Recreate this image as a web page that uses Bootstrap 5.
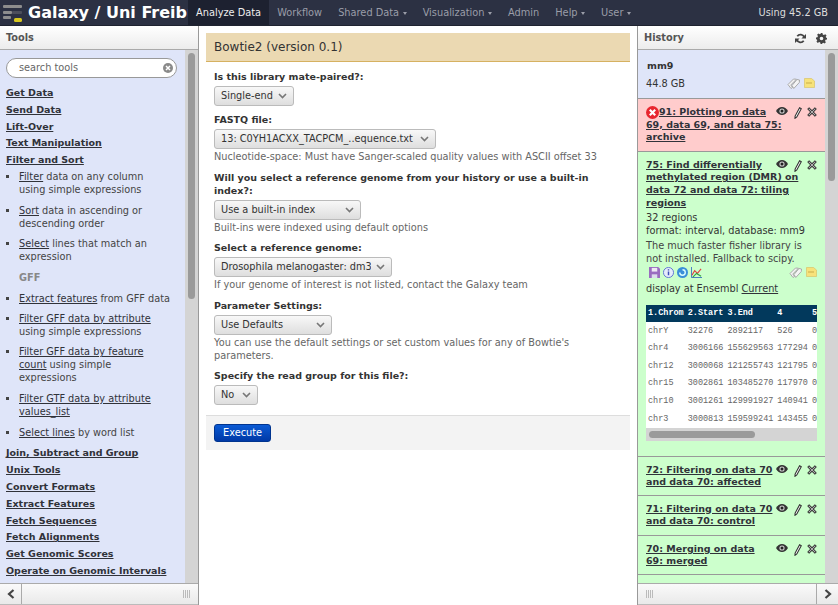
<!DOCTYPE html>
<html lang="en">
<head>
<meta charset="UTF-8">
<title>Galaxy / Uni Freiburg</title>
<link href="https://cdn.jsdelivr.net/npm/bootstrap@5.3.0/dist/css/bootstrap.min.css" rel="stylesheet">
<style>
html, body { height: 100%; overflow: hidden; }
body { font-family: "DejaVu Sans", sans-serif; font-size: 9.75px; line-height: 13px; color: #333; background: #fff; }
a { color: #303239; }
.gx-shell { height: 605px; width: 838px; }
.gx-top { height: 26px; background: #2c3143; color: #fff; flex: none; border-bottom: 1px solid #1f2330; }
.gx-logo { width: 26px; margin-left: 2px; flex: none; }
.gx-brand { width: 160px; font-size: 16px; font-weight: 700; line-height: 25px; color: #fff; overflow: hidden; white-space: nowrap; flex: none; }
.gx-tab { padding: 0 8px; font-size: 9.8px; line-height: 25px; color: #9a9da8; white-space: nowrap; }
.gx-tab.on { background: #1d2130; color: #eee; }
.gx-caret { display: inline-block; margin-left: 3.500px; vertical-align: middle; border-left: 2.500px solid transparent; border-right: 2.500px solid transparent; border-top: 3px solid #9a9da8; }
.gx-quota { margin-left: auto; padding-right: 10px; line-height: 25px; color: #ddd; white-space: nowrap; }
.gx-main { height: 579px; }
.gx-side { flex: none; background: #fff; }
.gx-left { width: 199px; border-right: 1px solid #999; }
.gx-right { width: 201px; border-left: 1px solid #999; margin-left: 7px; }
.gx-head { height: 24px; flex: none; padding: 1px 6px 0; font-weight: 700; line-height: 22px; color: #555; background: linear-gradient(#fff, #ececec); border-bottom: 1px solid #aaa; }
.gx-hicons { gap: 10px; padding-right: 5px; }
.gx-body { flex: 1; min-height: 0; }
.gx-scroll { flex: 1; min-width: 0; overflow: hidden; }
.gx-track { width: 13px; flex: none; background: #d4d4d4; }
.gx-thumb { width: 7px; margin: 3px auto 0; border-radius: 4px; background: #9a9a9a; }
.gx-foot { height: 22px; flex: none; background: linear-gradient(#fafafa, #e9e9e9); border-top: 1px solid #aaa; border-bottom: 1px solid #bbb; }
.gx-arrow { width: 22px; flex: none; border-right: 1px solid #aaa; }
.gx-arrow.flip { border-right: 0; border-left: 1px solid #aaa; }
.gx-grip { width: 7px; height: 8px; margin-right: 8px; background: repeating-linear-gradient(90deg, #bbb 0 1px, transparent 1px 2px); }
.gx-tools { background: #dfe5f9; height: 100%; padding: 8px 6px 0; overflow: hidden; }
.gx-search { height: 20px; width: 171px; margin-bottom: 6px; border: 1px solid #999; border-radius: 10px; background: #fff; padding: 0 3px 0 12px; line-height: 18px; color: #666; }
.gx-sect { display: block; font-size: 9.500px; font-weight: 700; color: #303239; line-height: 13px; padding: 2px 0 1.800px; white-space: nowrap; }
.gx-list { list-style: square; margin: 2px 8px -2px 0; padding: 0 0 0 13px; color: #444; }
.gx-list li { margin-bottom: 7.700px; line-height: 13px; }
.gx-list li.gx-sub { list-style: none; font-weight: 700; color: #888; }
.gx-list li.gx-snug { margin-bottom: 7px; }
.gx-form { width: 424px; margin: 7px 0 0 7px; }
.gx-title { height: 29px; padding: 0 8px; line-height: 28px; font-size: 12px; background: #ebd9b2; border-bottom: 1px solid #d6b161; color: #333; }
.gx-fields { padding: 8px 8px 7px; }
.gx-row { margin-bottom: 7.400px; }
.gx-label { display: block; margin: 0 0 3px; font-size: 9.500px; font-weight: 700; color: #333; }
.gx-help { color: #666; margin-top: -2px; }
.gx-pick.form-select { display: block; height: 20px; margin-bottom: 3px; padding: 0 20px 0 6px; font-size: 9.75px; line-height: 18px; color: #333; border: 1px solid #bbb; border-radius: 3px; background-color: #e9e9e9; background-image: url("data:image/svg+xml,%3csvg xmlns='http://www.w3.org/2000/svg' viewBox='0 0 9 6'%3e%3cpath fill='none' stroke='%23777' stroke-width='1.6' d='M1 1l3.5 3.5L8 1'/%3e%3c/svg%3e"), linear-gradient(#f8f8f8, #dedede); background-repeat: no-repeat; background-position: right 6px center, 0 0; background-size: 9px 6px, 100% 100%; }
.gx-actions { padding: 8px; background: #f3f3f3; border-top: 1px solid #ddd; }
.gx-run.btn { display: block; width: 57px; height: 18px; padding: 0; font-size: 9.75px; line-height: 16px; color: #fff; border: 1px solid #00348f; border-radius: 3px; background: linear-gradient(#0a5ad4, #0039a6); }
.gx-hist { height: 100%; overflow: hidden; }
.gx-info { background: #dfe5f9; padding: 5px 10px 7px 8px; border-bottom: 1px solid #999; height: 49px; }
.gx-name { font-size: 9.500px; font-weight: 700; margin: 4px 0 5px 1px; }
.gx-ds { padding: 6.500px 8px 0; border-bottom: 1px solid #999; color: #333; overflow: hidden; }
.gx-ds.err { background: #ffcccc; height: 53px; }
.gx-ds.ok { background: #ccffcc; }
.gx-ds-title { font-size: 9.500px; line-height: 12.700px; font-weight: 700; color: #303239; text-decoration: underline; }
.gx-ds-icons { width: 41px; height: 12px; margin-left: 3px; display: flex; justify-content: space-between; align-items: flex-start; padding-top: 1px; }
.gx-gap { margin-top: 2px; }
.gx-dsicons { padding-left: 3px; gap: 3px; }
.gx-peek { margin-top: 10px; width: 171px; overflow: hidden; background: #fff; }
.gx-peek table { font-family: "Liberation Mono", monospace; font-size: 8.500px; color: #666; border-collapse: collapse; background: #fff; white-space: nowrap; }
.gx-peek th { background: #02395c; color: #fff; height: 17px; padding: 0 2px; font-weight: 700; }
.gx-peek td { height: 17.600px; padding: 0 2px; }
.gx-hbar { width: 171px; height: 13px; background: #d4d4d4; display: flex; align-items: center; padding-left: 3px; }
.gx-hbar div { width: 106px; height: 7px; border-radius: 4px; background: #9a9a9a; }
</style>
</head>
<body>
<svg width="0" height="0" class="position-absolute">
  <symbol id="i-eye" viewBox="0 0 12 8"><path fill="#333" d="M0 4c1.6-2.6 3.6-4 6-4s4.400 1.400 6 4c-1.600 2.600-3.600 4-6 4S1.600 6.600 0 4z"/><circle cx="6" cy="4" r="2.600" fill="#ccc"/><circle cx="6" cy="4" r="1.500" fill="#222"/></symbol>
  <symbol id="i-pen" viewBox="0 0 8 12"><path fill="#fff" stroke="#333" stroke-width="1.100" d="M5.600 .8l1.700.9-4.500 8.300-1.800 1.300.1-2.200z"/></symbol>
  <symbol id="i-x" viewBox="0 0 10 10"><path fill="#444" stroke="#222" stroke-width=".4" d="M2 .5L5 3.300 8 .5 9.500 2 6.700 5l2.800 3L8 9.500 5 6.700 2 9.500.5 8l2.800-3L.5 2z"/><path stroke="#ddd" stroke-width=".7" d="M2 2l6 6M8 2L2 8"/></symbol>
  <symbol id="i-tag" viewBox="0 0 13 11"><path fill="#f4f4f4" stroke="#aaa" d="M1 6.500L6.500 1l3 .2-5.700 5.800 1.700 2.500L4 10.500zM5 7.500L10 1.500l2.500.5-.2 2.500-5.500 6z"/></symbol>
  <symbol id="i-note" viewBox="0 0 11 10"><path fill="#f7e27a" stroke="#d8c46a" stroke-width=".7" d="M.5 .5h7l3 2.500v6.500H.5z"/><path stroke="#c9ad4a" d="M2 5h6"/></symbol>
  <symbol id="i-left" viewBox="0 0 8 10"><path fill="none" stroke="#444" stroke-width="2.200" d="M6.500 1L2 5l4.500 4"/></symbol>
  <symbol id="i-right" viewBox="0 0 8 10"><path fill="none" stroke="#444" stroke-width="2.200" d="M1.500 1L6 5 1.500 9"/></symbol>
</svg>

<div class="gx-shell d-flex flex-column">
  <div class="gx-top d-flex align-items-start">
    <svg class="gx-logo" height="24" viewBox="0 0 26 24"><rect x="1" y="5" width="19" height="3" rx="1" fill="#8d8d8d"/><rect x="1" y="11" width="9" height="3" rx="1" fill="#8d8d8d"/><rect x="10" y="11" width="10" height="3" rx="1" fill="#4c4f5c"/><rect x="1" y="16" width="8" height="3" rx="1" fill="#8d8d8d"/><rect x="12" y="18" width="8" height="4" rx="1.500" fill="#d8c81f"/></svg>
    <div class="gx-brand">Galaxy / Uni Freiburg</div>
    <div class="gx-tab on">Analyze Data</div>
    <div class="gx-tab">Workflow</div>
    <div class="gx-tab">Shared Data<span class="gx-caret"></span></div>
    <div class="gx-tab">Visualization<span class="gx-caret"></span></div>
    <div class="gx-tab">Admin</div>
    <div class="gx-tab">Help<span class="gx-caret"></span></div>
    <div class="gx-tab">User<span class="gx-caret"></span></div>
    <div class="gx-quota">Using 45.2 GB</div>
  </div>

  <div class="gx-main d-flex">
    <div class="gx-side gx-left d-flex flex-column">
      <div class="gx-head">Tools</div>
      <div class="gx-body d-flex">
        <div class="gx-scroll">
          <div class="gx-tools">
            <div class="gx-search d-flex justify-content-between align-items-center"><span>search tools</span>
              <svg width="10" height="10" viewBox="0 0 10 10"><circle cx="5" cy="5" r="5" fill="#8a8a8a"/><path stroke="#fff" stroke-width="1.500" d="M3 3l4 4M7 3L3 7"/></svg></div>
            <a class="gx-sect" href="#">Get Data</a>
            <a class="gx-sect" href="#">Send Data</a>
            <a class="gx-sect" href="#">Lift-Over</a>
            <a class="gx-sect" href="#">Text Manipulation</a>
            <a class="gx-sect" href="#">Filter and Sort</a>
            <ul class="gx-list">
              <li><a href="#">Filter</a> data on any column using simple expressions</li>
              <li><a href="#">Sort</a> data in ascending or descending order</li>
              <li><a href="#">Select</a> lines that match an expression</li>
              <li class="gx-sub">GFF</li>
              <li class="gx-snug"><a href="#">Extract features</a> from GFF data</li>
              <li><a href="#">Filter GFF data by attribute</a> using simple expressions</li>
              <li><a href="#">Filter GFF data by feature count</a> using simple expressions</li>
              <li><a href="#">Filter GTF data by attribute values_list</a></li>
              <li><a href="#">Select lines</a> by word list</li>
            </ul>
            <a class="gx-sect" href="#">Join, Subtract and Group</a>
            <a class="gx-sect" href="#">Unix Tools</a>
            <a class="gx-sect" href="#">Convert Formats</a>
            <a class="gx-sect" href="#">Extract Features</a>
            <a class="gx-sect" href="#">Fetch Sequences</a>
            <a class="gx-sect" href="#">Fetch Alignments</a>
            <a class="gx-sect" href="#">Get Genomic Scores</a>
            <a class="gx-sect" href="#">Operate on Genomic Intervals</a>
          </div>
        </div>
        <div class="gx-track"><div class="gx-thumb" style="height:246px"></div></div>
      </div>
      <div class="gx-foot d-flex align-items-center justify-content-between">
        <div class="gx-arrow h-100 d-flex align-items-center justify-content-center"><svg width="8" height="10"><use href="#i-left"/></svg></div>
        <div class="gx-grip"></div>
      </div>
    </div>

    <div class="gx-form">
      <div class="gx-title">Bowtie2 (version 0.1)</div>
      <form class="gx-fields">
        <div class="gx-row">
          <label class="gx-label">Is this library mate-paired?:</label>
          <select class="form-select gx-pick" style="width:80px"><option>Single-end</option></select>
        </div>
        <div class="gx-row">
          <label class="gx-label">FASTQ file:</label>
          <select class="form-select gx-pick" style="width:222px"><option>13: C0YH1ACXX_TACPCM_..equence.txt</option></select>
          <div class="gx-help">Nucleotide-space: Must have Sanger-scaled quality values with ASCII offset 33</div>
        </div>
        <div class="gx-row">
          <label class="gx-label">Will you select a reference genome from your history or use a built-in index?:</label>
          <select class="form-select gx-pick" style="width:147px"><option>Use a built-in index</option></select>
          <div class="gx-help">Built-ins were indexed using default options</div>
        </div>
        <div class="gx-row">
          <label class="gx-label">Select a reference genome:</label>
          <select class="form-select gx-pick" style="width:178px"><option>Drosophila melanogaster: dm3</option></select>
          <div class="gx-help">If your genome of interest is not listed, contact the Galaxy team</div>
        </div>
        <div class="gx-row">
          <label class="gx-label">Parameter Settings:</label>
          <select class="form-select gx-pick" style="width:118px"><option>Use Defaults</option></select>
          <div class="gx-help">You can use the default settings or set custom values for any of Bowtie's parameters.</div>
        </div>
        <div class="gx-row mb-0">
          <label class="gx-label">Specify the read group for this file?:</label>
          <select class="form-select gx-pick" style="width:44px"><option>No</option></select>
        </div>
      </form>
      <div class="gx-actions"><button type="button" class="btn gx-run">Execute</button></div>
    </div>

    <div class="gx-side gx-right d-flex flex-column">
      <div class="gx-head d-flex justify-content-between align-items-center">
        <span>History</span>
        <span class="d-flex gx-hicons align-items-center">
          <svg width="11" height="11" viewBox="0 0 12 12"><path fill="none" stroke="#444" stroke-width="2" d="M10 4.500A4.300 4.300 0 0 0 2.500 3.500M2 7.500a4.300 4.300 0 0 0 7.500 1"/><path fill="#444" d="M12 1v5H7zM0 11V6h5z"/></svg>
          <svg width="11" height="11" viewBox="0 0 12 12"><path fill="#444" fill-rule="evenodd" d="M5 0h2l.4 1.700 1.200.5L10.100 1.300l1.400 1.400-.9 1.500.5 1.200L12 5v2l-1.600.4-.5 1.200.9 1.500-1.400 1.400-1.500-.9-1.200.5L7 12H5l-.4-1.600-1.200-.5-1.500.9-1.400-1.400.9-1.500-.5-1.200L0 7V5l1.600-.4.5-1.200-.9-1.500L2.600 .5l1.500.9 1.200-.5zM6 4a2 2 0 1 0 0 4 2 2 0 0 0 0-4z"/></svg>
        </span>
      </div>
      <div class="gx-body d-flex">
        <div class="gx-scroll">
          <div class="gx-hist">
            <div class="gx-info">
              <div class="gx-name">mm9</div>
              <div class="d-flex justify-content-between align-items-center">
                <span>44.8 GB</span>
                <span class="d-flex gap-1"><svg width="13" height="11"><use href="#i-tag"/></svg><svg width="11" height="10"><use href="#i-note"/></svg></span>
              </div>
            </div>
            <div class="gx-ds err">
              <div class="gx-ds-icons float-end"><svg width="12" height="8"><use href="#i-eye"/></svg><svg width="8" height="12"><use href="#i-pen"/></svg><svg width="10" height="10"><use href="#i-x"/></svg></div>
              <div class="gx-ds-title">
                <svg class="align-text-top" width="13" height="13" viewBox="0 0 12 12"><circle cx="6" cy="6" r="6" fill="#e8262f"/><path stroke="#fff" stroke-width="2" d="M3.500 3.500l5 5M8.500 3.500l-5 5"/></svg>91: Plotting on data 69, data 69, and data 75: archive
              </div>
            </div>
            <div class="gx-ds ok" style="height:305px">
              <div class="gx-ds-icons float-end"><svg width="12" height="8"><use href="#i-eye"/></svg><svg width="8" height="12"><use href="#i-pen"/></svg><svg width="10" height="10"><use href="#i-x"/></svg></div>
              <div class="gx-ds-title">75: Find differentially methylated region (DMR) on data 72 and data 72: tiling regions</div>
              <div class="gx-gap">32 regions<br>format: interval, database: mm9</div>
              <div class="gx-gap" style="color:#444">The much faster fisher library is not installed. Fallback to scipy.</div>
              <div class="d-flex justify-content-between gx-gap" style="height:13px">
                <span class="d-flex gx-dsicons">
                  <svg width="11" height="11" viewBox="0 0 12 12"><path fill="#9a6cc0" d="M0 0h10l2 2v10H0z"/><path fill="#efe8f5" d="M3 1h6v4H3z"/><path fill="#dcdcec" d="M3 8h6v4H3z"/></svg>
                  <svg width="11" height="11" viewBox="0 0 12 12"><circle cx="6" cy="6" r="5.500" fill="#e6ecfb" stroke="#5a6fd0"/><path stroke="#3b4fb8" stroke-width="1.600" d="M6 5v4M6 2.500v1.300"/></svg>
                  <svg width="11" height="11" viewBox="0 0 12 12"><circle cx="6" cy="6" r="6" fill="#3a8fd8"/><path fill="none" stroke="#dff" stroke-width="1.500" d="M3 6a3 3 0 1 0 3-3"/></svg>
                  <svg width="11" height="11" viewBox="0 0 12 12"><path fill="none" stroke="#3a6fc0" d="M.5 0v11.500H12"/><path fill="none" stroke="#e04040" stroke-width="1.200" d="M1 9l3-5 3 3 4-5"/><path fill="none" stroke="#30a040" stroke-width="1.200" d="M2 11l4-4 5 3"/></svg>
                </span>
                <span class="d-flex gap-1"><svg width="13" height="11"><use href="#i-tag"/></svg><svg width="11" height="10"><use href="#i-note"/></svg></span>
              </div>
              <div class="gx-gap">display at Ensembl <a href="#">Current</a></div>
              <div class="gx-peek">
                <table>
                  <tr><th>1.Chrom</th><th>2.Start</th><th>3.End</th><th>4</th><th>5</th></tr>
                  <tr><td>chrY</td><td>32276</td><td>2892117</td><td>526</td><td>0</td></tr>
                  <tr><td>chr4</td><td>3006166</td><td>155629563</td><td>177294</td><td>0</td></tr>
                  <tr><td>chr12</td><td>3000068</td><td>121255743</td><td>121795</td><td>0</td></tr>
                  <tr><td>chr15</td><td>3002861</td><td>103485270</td><td>117970</td><td>0</td></tr>
                  <tr><td>chr10</td><td>3001261</td><td>129991927</td><td>140941</td><td>0</td></tr>
                  <tr><td>chr3</td><td>3000813</td><td>159599241</td><td>143455</td><td>0</td></tr>
                </table>
              </div>
              <div class="gx-hbar"><div></div></div>
            </div>
            <div class="gx-ds ok" style="height:39px">
              <div class="gx-ds-icons float-end"><svg width="12" height="8"><use href="#i-eye"/></svg><svg width="8" height="12"><use href="#i-pen"/></svg><svg width="10" height="10"><use href="#i-x"/></svg></div>
              <div class="gx-ds-title">72: Filtering on data 70 and data 70: affected</div>
            </div>
            <div class="gx-ds ok" style="height:40px">
              <div class="gx-ds-icons float-end"><svg width="12" height="8"><use href="#i-eye"/></svg><svg width="8" height="12"><use href="#i-pen"/></svg><svg width="10" height="10"><use href="#i-x"/></svg></div>
              <div class="gx-ds-title">71: Filtering on data 70 and data 70: control</div>
            </div>
            <div class="gx-ds ok" style="height:39px">
              <div class="gx-ds-icons float-end"><svg width="12" height="8"><use href="#i-eye"/></svg><svg width="8" height="12"><use href="#i-pen"/></svg><svg width="10" height="10"><use href="#i-x"/></svg></div>
              <div class="gx-ds-title">70: Merging on data 69: merged</div>
            </div>
            <div class="gx-ds ok" style="height:12px"></div>
          </div>
        </div>
        <div class="gx-track"><div class="gx-thumb" style="height:128px"></div></div>
      </div>
      <div class="gx-foot d-flex align-items-center justify-content-between">
        <div class="gx-grip ms-2"></div>
        <div class="gx-arrow flip h-100 d-flex align-items-center justify-content-center"><svg width="8" height="10"><use href="#i-right"/></svg></div>
      </div>
    </div>
  </div>
</div>
<script src="https://cdn.jsdelivr.net/npm/bootstrap@5.3.0/dist/js/bootstrap.bundle.min.js"></script>
</body>
</html>
